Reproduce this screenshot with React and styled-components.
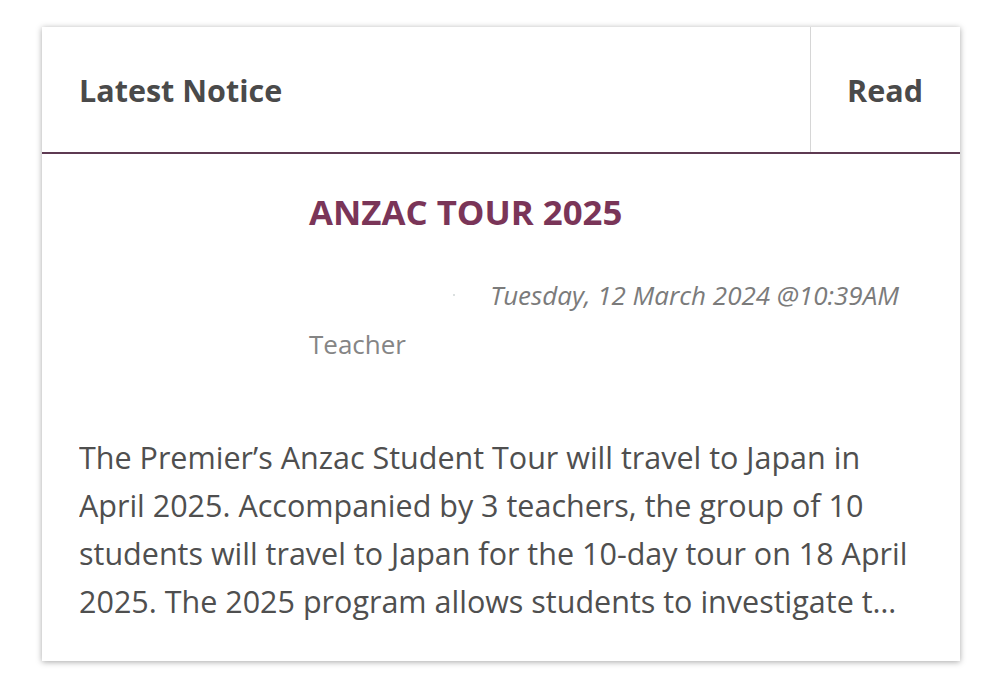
import React from "react";
import styled, { createGlobalStyle } from "styled-components";

const Global = createGlobalStyle`
  html, body { margin: 0; padding: 0; background: #fff; }
  body { font-family: "Open Sans", "Noto Sans", sans-serif; }
  * { box-sizing: border-box; }
`;

const Page = styled.div`
  padding: 27px 40px 22px 42px;
`;

const Card = styled.div`
  width: 918px;
  height: 634px;
  background: #fff;
  box-shadow: 0 1px 6px rgba(0, 0, 0, 0.35);
  display: flex;
  flex-direction: column;
  overflow: hidden;
`;

const Header = styled.div`
  display: flex;
  height: 127px;
  border-bottom: 2px solid #5e3a52;
`;

const HeaderCell = styled.div`
  display: flex;
  align-items: center;
  padding: 0 37px;
  font-size: 30.5px;
  font-weight: 700;
  color: #4a4a4a;
  flex: ${(p) => (p.$grow ? 1 : "none")};
  width: ${(p) => (p.$grow ? "auto" : "150px")};
  border-left: ${(p) => (p.$grow ? "none" : "1px solid #d6d6d6")};
  justify-content: ${(p) => (p.$grow ? "flex-start" : "flex-end")};
`;

const Body = styled.div`
  padding: 37px 38px 0 37px;
  display: flex;
  flex-direction: column;
`;

const Top = styled.div`
  display: flex;
`;

const Spacer = styled.div`
  width: 230px;
  flex: none;
`;

const Info = styled.div`
  flex: 1;
  display: flex;
  flex-direction: column;
`;

const Title = styled.h2`
  margin: 0;
  font-size: 34.8px;
  line-height: 42px;
  font-weight: 700;
  color: #7a3558;
`;

const DateRow = styled.div`
  display: flex;
  justify-content: flex-end;
  align-items: center;
  gap: 35px;
  margin-top: 45px;
  padding-right: 23px;
`;

const Dot = styled.span`
  width: 2px;
  height: 2px;
  background: #cfd6d6;
  border-radius: 1px;
`;

const DateText = styled.span`
  font-size: 26px;
  line-height: 34px;
  font-style: italic;
  color: #7b7b7b;
`;

const Author = styled.div`
  font-size: 26px;
  line-height: 34px;
  color: #858585;
  margin-top: 15px;
`;

const Text = styled.p`
  margin: 72px 0 0;
  padding-right: 12px;
  font-size: 30.5px;
  line-height: 48px;
  color: #4f4f4f;
  display: -webkit-box;
  -webkit-box-orient: vertical;
  -webkit-line-clamp: 4;
  overflow: hidden;
`;

export default function App() {
  return (
    <>
      <Global />
      <Page>
        <Card>
          <Header>
            <HeaderCell $grow>Latest Notice</HeaderCell>
            <HeaderCell>Read</HeaderCell>
          </Header>
          <Body>
            <Top>
              <Spacer />
              <Info>
                <Title>ANZAC TOUR 2025</Title>
                <DateRow>
                  <Dot />
                  <DateText>Tuesday, 12 March 2024 @10:39AM</DateText>
                </DateRow>
                <Author>Teacher</Author>
              </Info>
            </Top>
            <Text>
              The Premier’s Anzac Student Tour will travel to Japan in April 2025. Accompanied by 3 teachers, the group of 10 students will travel to Japan for the 10-day tour on 18 April 2025. The 2025 program allows students to investigate the experiences of Australians in Japan during and after the war.
            </Text>
          </Body>
        </Card>
      </Page>
    </>
  );
}
